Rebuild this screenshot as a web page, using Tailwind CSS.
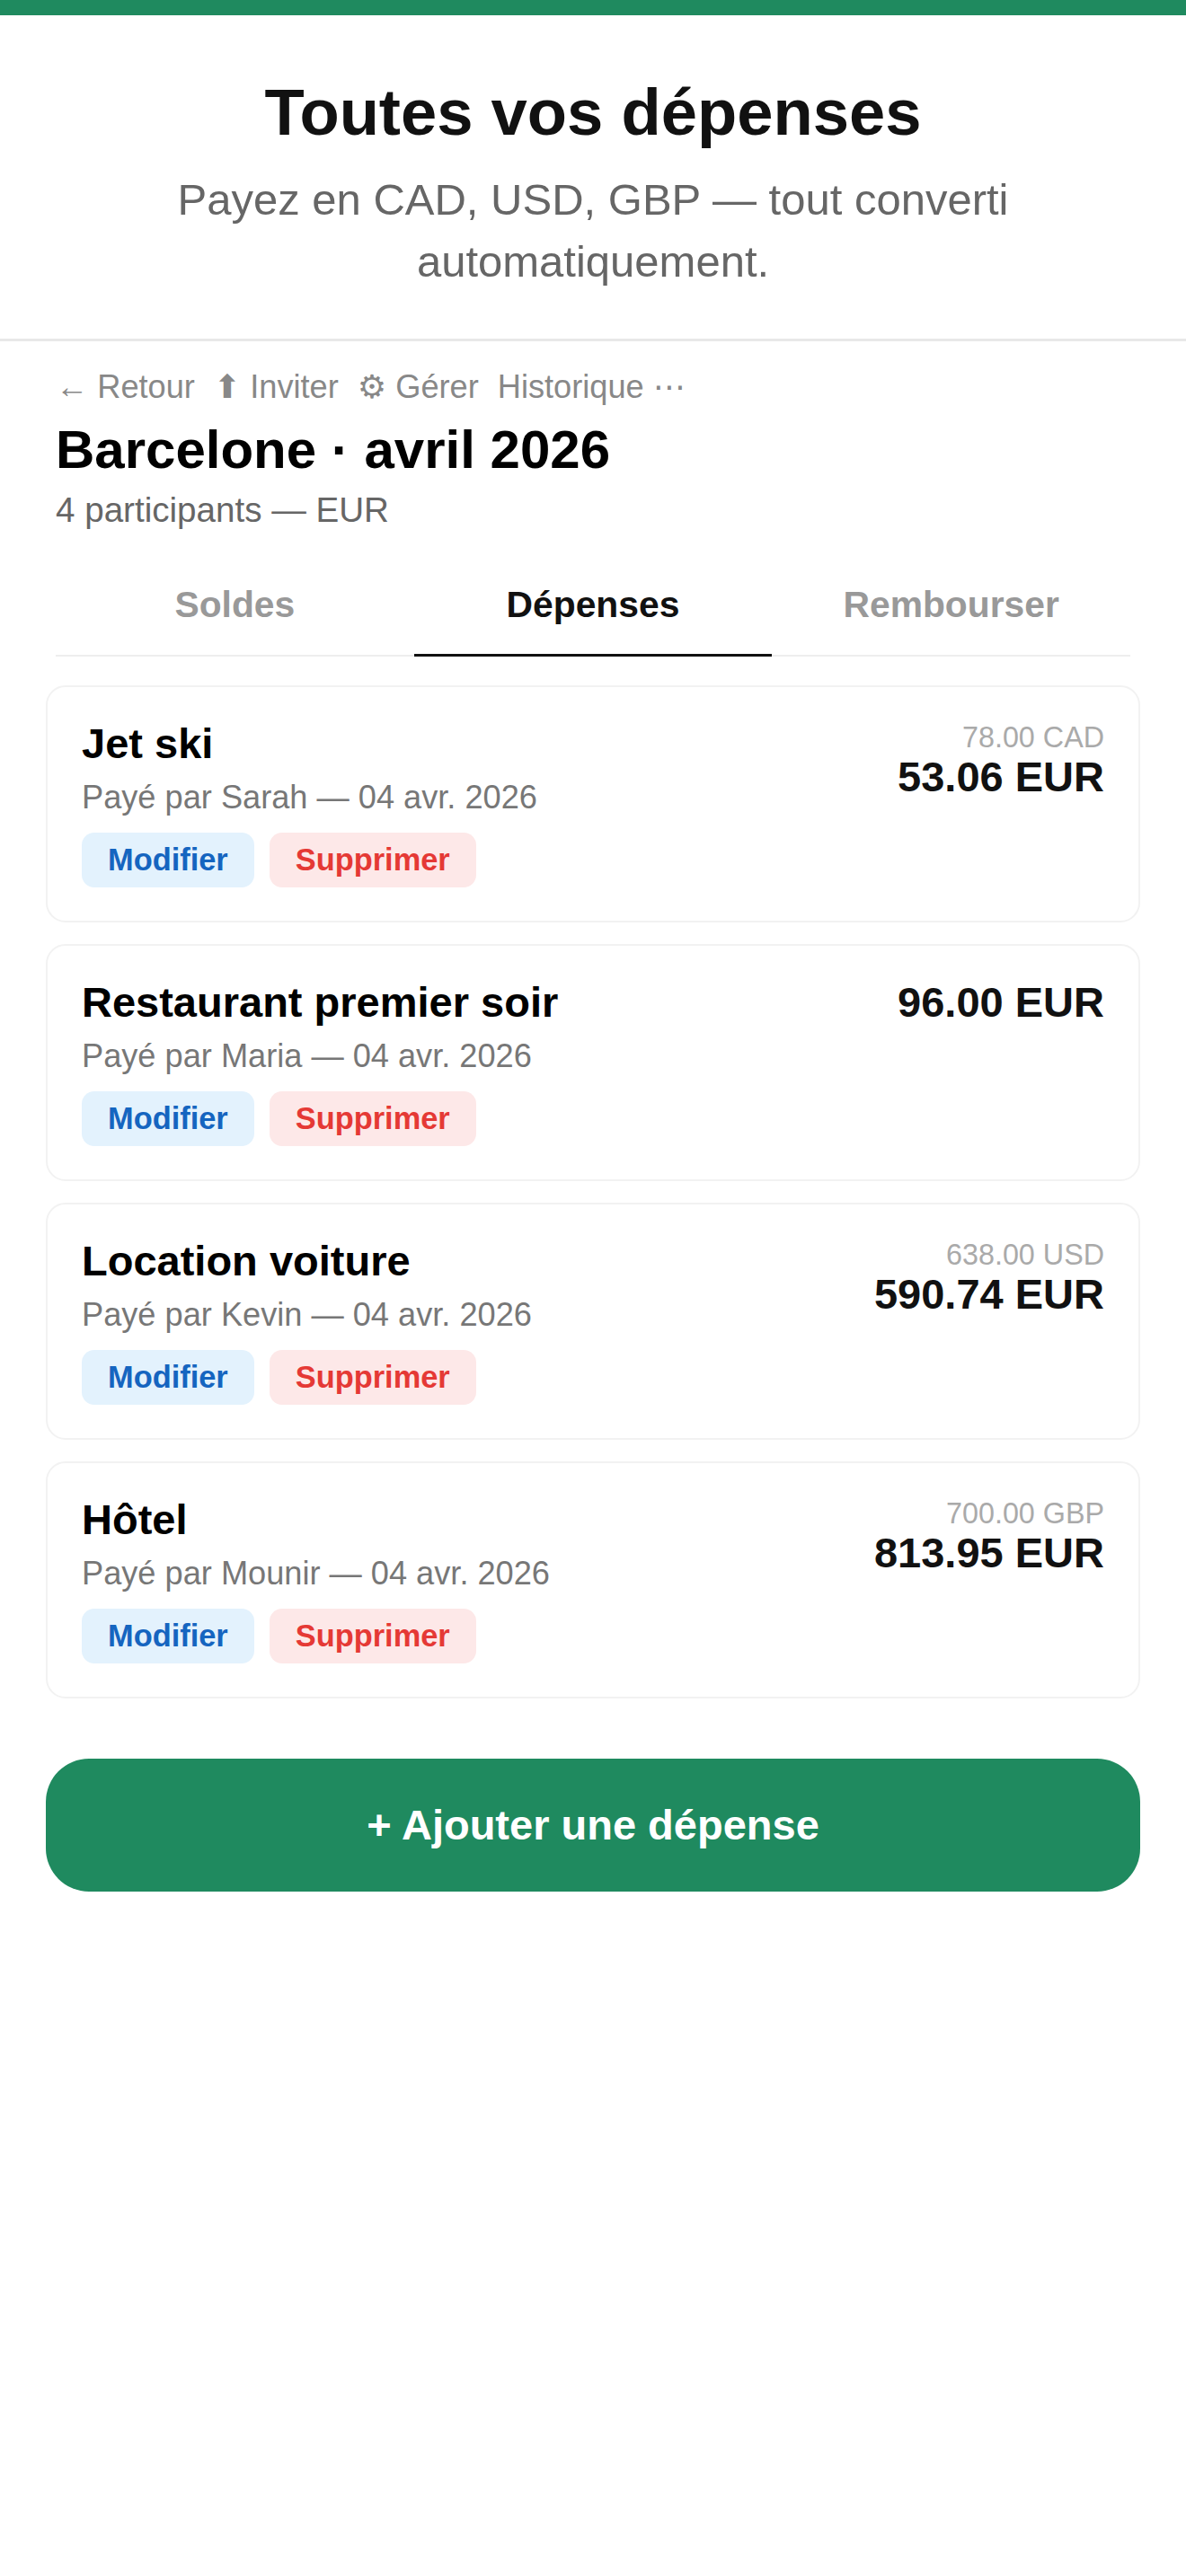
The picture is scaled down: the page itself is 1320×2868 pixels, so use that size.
<!DOCTYPE html>
<html lang="fr">
<head>
    <meta charset="UTF-8">
    <title>Toutes vos dépenses</title>
    <script src="https://cdn.jsdelivr.net/npm/@tailwindcss/browser@4"></script>
</head>
<body class="bg-white min-h-screen font-['Liberation_Sans','DejaVu_Sans',sans-serif]">

    <div class="h-[17px] bg-[#1f8a5f]"></div>

    <!-- Header -->
    <header class="pt-[66px] pb-[51px] px-[100px] text-center border-b-[3px] border-[#e8e8e8]">
        <h1 class="text-[72.4px] leading-[84px] font-bold text-[#111]">Toutes vos dépenses</h1>
        <p class="mt-[21px] text-[49px] leading-[69px] text-[#666]">Payez en CAD, USD, GBP — tout converti automatiquement.</p>
    </header>

    <!-- Trip title -->
    <section class="px-[62px] pt-[29px]">
        <nav class="flex items-center gap-[21px] text-[36.2px] leading-[44px] text-[#888]">
            <span>← Retour</span>
            <span>⬆ Inviter</span>
            <span>⚙ Gérer</span>
            <span>Historique ⋯</span>
        </nav>
        <h2 class="mt-[13px] text-[60px] leading-[70px] font-bold text-black">Barcelone · avril 2026</h2>
        <p class="mt-[9px] text-[38.6px] leading-[46px] text-[#666]">4 participants — EUR</p>

        <!-- Tabs -->
        <div class="mt-[36px] grid grid-cols-3 text-[40.8px] leading-[48px] font-bold text-center">
            <div class="pt-[22px] pb-[32px] text-[#999] border-b-2 border-[#eee]">Soldes</div>
            <div class="pt-[22px] pb-[31px] text-[#111] border-b-[3px] border-[#111]">Dépenses</div>
            <div class="pt-[22px] pb-[32px] text-[#999] border-b-2 border-[#eee]">Rembourser</div>
        </div>
    </section>

    <!-- Expenses -->
    <main class="px-[51px] pt-[32px] flex flex-col gap-[24px]">

        <article class="h-[264px] flex justify-between rounded-[22px] border-2 border-[#f2f2f2] bg-white px-[38px] pt-[37px]">
            <div>
                <h3 class="text-[47px] leading-[52px] font-bold text-black">Jet ski</h3>
                <p class="mt-[12px] text-[36.2px] leading-[44px] text-[#777]">Payé par Sarah — 04 avr. 2026</p>
                <div class="mt-[17px] flex gap-[17px] text-[34.4px] leading-[61px] font-bold">
                    <span class="px-[29px] rounded-[14px] bg-[#e3f2fd] text-[#1565c0]">Modifier</span>
                    <span class="px-[29px] rounded-[14px] bg-[#fde8e8] text-[#e53935]">Supprimer</span>
                </div>
            </div>
            <div class="text-right">
                <div class="text-[32.3px] leading-[38px] text-[#aaa]">78.00 CAD</div>
                <div class="text-[47px] leading-[50px] font-bold text-[#111]">53.06 EUR</div>
            </div>
        </article>

        <article class="h-[264px] flex justify-between rounded-[22px] border-2 border-[#f2f2f2] bg-white px-[38px] pt-[37px]">
            <div>
                <h3 class="text-[47px] leading-[52px] font-bold text-black">Restaurant premier soir</h3>
                <p class="mt-[12px] text-[36.2px] leading-[44px] text-[#777]">Payé par Maria — 04 avr. 2026</p>
                <div class="mt-[17px] flex gap-[17px] text-[34.4px] leading-[61px] font-bold">
                    <span class="px-[29px] rounded-[14px] bg-[#e3f2fd] text-[#1565c0]">Modifier</span>
                    <span class="px-[29px] rounded-[14px] bg-[#fde8e8] text-[#e53935]">Supprimer</span>
                </div>
            </div>
            <div class="text-right">
                <div class="text-[47px] leading-[52px] font-bold text-[#111]">96.00 EUR</div>
            </div>
        </article>

        <article class="h-[264px] flex justify-between rounded-[22px] border-2 border-[#f2f2f2] bg-white px-[38px] pt-[37px]">
            <div>
                <h3 class="text-[47px] leading-[52px] font-bold text-black">Location voiture</h3>
                <p class="mt-[12px] text-[36.2px] leading-[44px] text-[#777]">Payé par Kevin — 04 avr. 2026</p>
                <div class="mt-[17px] flex gap-[17px] text-[34.4px] leading-[61px] font-bold">
                    <span class="px-[29px] rounded-[14px] bg-[#e3f2fd] text-[#1565c0]">Modifier</span>
                    <span class="px-[29px] rounded-[14px] bg-[#fde8e8] text-[#e53935]">Supprimer</span>
                </div>
            </div>
            <div class="text-right">
                <div class="text-[32.3px] leading-[38px] text-[#aaa]">638.00 USD</div>
                <div class="text-[47px] leading-[50px] font-bold text-[#111]">590.74 EUR</div>
            </div>
        </article>

        <article class="h-[264px] flex justify-between rounded-[22px] border-2 border-[#f2f2f2] bg-white px-[38px] pt-[37px]">
            <div>
                <h3 class="text-[47px] leading-[52px] font-bold text-black">Hôtel</h3>
                <p class="mt-[12px] text-[36.2px] leading-[44px] text-[#777]">Payé par Mounir — 04 avr. 2026</p>
                <div class="mt-[17px] flex gap-[17px] text-[34.4px] leading-[61px] font-bold">
                    <span class="px-[29px] rounded-[14px] bg-[#e3f2fd] text-[#1565c0]">Modifier</span>
                    <span class="px-[29px] rounded-[14px] bg-[#fde8e8] text-[#e53935]">Supprimer</span>
                </div>
            </div>
            <div class="text-right">
                <div class="text-[32.3px] leading-[38px] text-[#aaa]">700.00 GBP</div>
                <div class="text-[47px] leading-[50px] font-bold text-[#111]">813.95 EUR</div>
            </div>
        </article>

        <button class="mt-[43px] h-[148px] w-full rounded-[48px] bg-[#1f8a5f] text-white text-[47px] font-bold">+ Ajouter une dépense</button>
    </main>

</body>
</html>
